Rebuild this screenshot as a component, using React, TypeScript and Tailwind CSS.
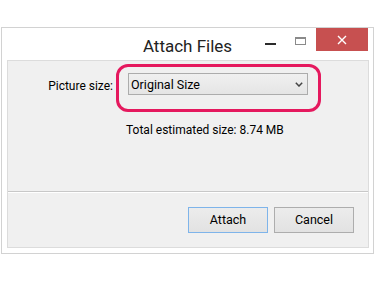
import React from "react";

const font = { fontFamily: "Roboto, 'Noto Sans', sans-serif" };

function TitleBar() {
  return (
    <div className="grid grid-cols-[1fr_auto_1fr] h-[32px]">
      <div />
      <div className="mt-[8px] text-[17px] leading-[20px] text-[#222]">Attach Files</div>
      <div className="flex justify-end items-start pr-[5px]">
        <div className="mt-[15px] w-[11px] h-[2px] bg-[#2b2b2b]" />
        <div className="ml-[19px] mt-[9px] w-[11px] h-[8px] border border-[#8a8a8a] border-t-2" />
        <button className="ml-[10px] w-[52px] h-[23px] bg-[#c75050] flex items-center justify-center">
          <svg width="10" height="10" viewBox="0 0 10 10">
            <path d="M1 1L9 9M9 1L1 9" stroke="#fff" strokeWidth="1.4" />
          </svg>
        </button>
      </div>
    </div>
  );
}

function Dropdown() {
  return (
    <div className="w-[180px] h-[22px] border border-[#acacac] bg-gradient-to-b from-[#f0f0f0] to-[#e5e5e5] flex items-center justify-between pl-[2px] pr-[4px]">
      <span className="text-[12.5px] leading-[20px] text-[#000] mt-[2px]">Original Size</span>
      <svg width="8" height="5" viewBox="0 0 8 5">
        <path d="M0.8 0.8L4 4L7.2 0.8" fill="none" stroke="#444" strokeWidth="1.5" />
      </svg>
    </div>
  );
}

export default function App() {
  return (
    <div className="w-[375px] h-[281px] bg-white pt-[27px] pl-px" style={font}>
      <div className="w-[373px] h-[227px] border border-[#d2d2d2] bg-white flex flex-col">
        <TitleBar />
        <div className="ml-[5px] w-[362px] h-[188px] border border-[#dcdcdc] bg-[#f0f0f0] flex flex-col">
          <div className="h-[130px] flex flex-col">
            <div className="flex items-start pl-[42px] mt-[3px]">
              <div className="w-[63px] mt-[14px] flex justify-end whitespace-nowrap text-[12px] leading-[16px] text-[#000]">Picture size:</div>
              <div className="ml-[3px] w-[205px] h-[48px] border-[3px] border-[#e5195e] rounded-[12px] pt-[6px] pl-[9px]">
                <Dropdown />
              </div>
            </div>
            <div className="pl-[118px] mt-[10px] text-[12px] leading-[16px] text-[#000]">
              Total estimated size: 8.74 MB
            </div>
          </div>
          <div className="h-px bg-[#c8c8c8]" />
          <div className="flex justify-end gap-[6px] pt-[14px] pr-[14px] border-t border-white">
            <button className="w-[80px] h-[26px] border border-[#7eb4ea] bg-gradient-to-b from-[#ececec] to-[#e2e2e2] text-[12.5px] text-[#000]">
              Attach
            </button>
            <button className="w-[80px] h-[26px] border border-[#adadad] bg-gradient-to-b from-[#ececec] to-[#e2e2e2] text-[12.5px] text-[#000]">
              Cancel
            </button>
          </div>
        </div>
      </div>
    </div>
  );
}
